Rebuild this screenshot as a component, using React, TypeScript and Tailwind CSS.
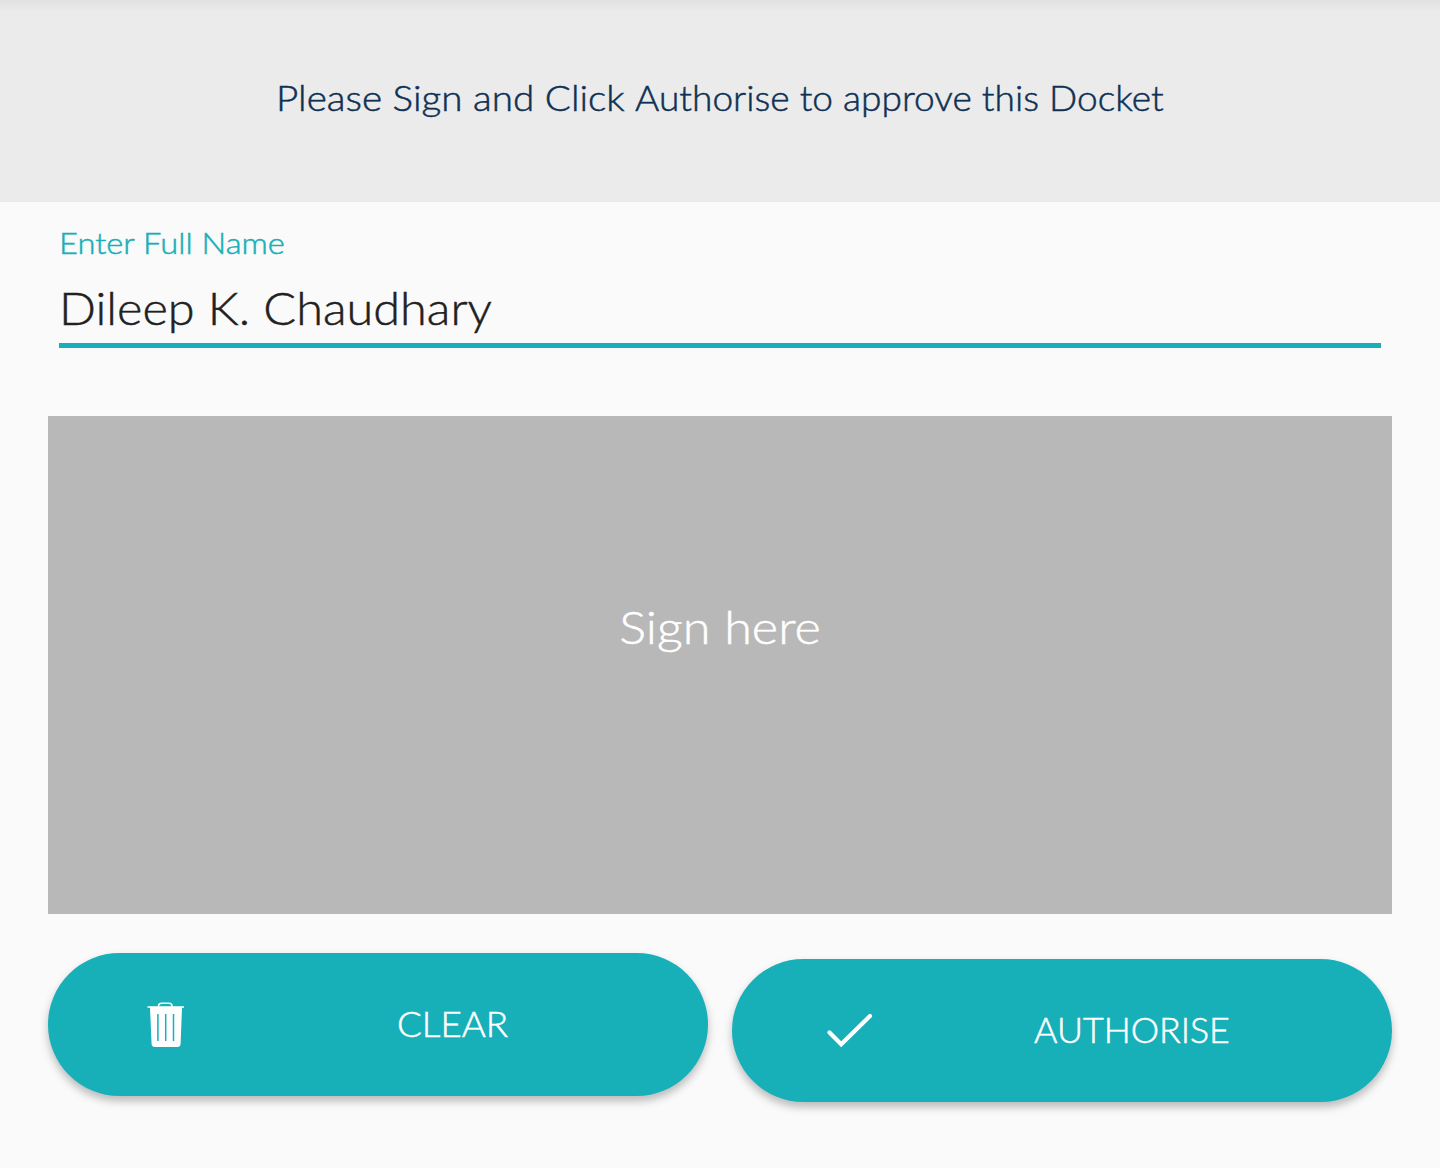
import type { ReactNode } from "react";

function TrashIcon() {
  return (
    <svg width="38" height="46" viewBox="0 0 38 46" fill="none" aria-hidden="true">
      <path d="M11.500 5V4Q11.500 1.200 14.500 1.200H22Q25 1.200 25 4V5" stroke="white" strokeWidth="1.500" />
      <path d="M0.500 4.200H37V5.800H35L33.600 42Q33.400 45 30.200 45H8Q4.800 45 4.600 42L3 5.800H0.500Z" fill="white" />
      <path d="M10.900 12V39M18.700 12V39M26.500 12V39" stroke="#17b0b9" strokeWidth="1.500" />
    </svg>
  );
}

function CheckIcon() {
  return (
    <svg width="48" height="36" viewBox="0 0 48 36" fill="none" aria-hidden="true">
      <path d="M3.500 19.500L15.200 31.200L44 3" stroke="white" strokeWidth="4.200" strokeLinecap="round" />
    </svg>
  );
}

function PillButton({ icon, children, className }: { icon: ReactNode; children: ReactNode; className: string }) {
  return (
    <button
      type="button"
      className={`flex h-[143px] w-[660px] items-center rounded-full bg-[#17b0b9] text-[35px] leading-[42px] font-light text-white shadow-[0_5px_8px_rgba(0,0,0,0.26)] ${className}`}
    >
      {icon}
      {children}
    </button>
  );
}

export default function App() {
  return (
    <main className="h-[1168px] w-[1440px] overflow-hidden bg-[#fafafa] font-['Lato',sans-serif] font-light [-webkit-text-stroke-width:0.5px]">
      <header className="flex h-[202px] justify-center bg-[#ebebeb] bg-[linear-gradient(to_bottom,#e2e2e2_0,#ebebeb_12px)] pt-[76px]">
        <h1 className="flex h-[42px] w-[888px] justify-between text-[35px] leading-[42px] font-light whitespace-nowrap text-[#0f3154]">
          <span className="origin-left scale-x-[1.104]">Please Sign and Click </span>
          <span className="origin-right scale-x-[1.06]">Authorise to approve this Docket</span>
        </h1>
      </header>
      <section className="mx-[59px] flex h-[146px] flex-col border-b-[5px] border-[#17b0b9] pt-5">
        <label htmlFor="full-name" className="h-10 text-[30px] leading-10 text-[#17b0b9]">
          <span className="inline-block origin-left scale-x-[1.09]">Enter Full Name</span>
        </label>
        <div id="full-name" className="mt-[18px] h-14 text-[46px] leading-[56px] whitespace-nowrap text-[#212121]">
          <span className="inline-block origin-left scale-x-[1.058]">Dileep K. Chaudhary</span>
        </div>
      </section>
      <section className="mx-12 mt-[68px] flex h-[498px] justify-center bg-[#b8b8b8] pt-[183px]">
        <span className="h-14 scale-x-[1.12] text-[45px] leading-[56px] text-white">Sign here</span>
      </section>
      <div className="mx-12 mt-[39px] flex gap-6">
        <PillButton icon={<TrashIcon />} className="pl-[99px]">
          <span className="mb-[3px] ml-[212px] inline-block origin-left scale-x-[1.05]">CLEAR</span>
        </PillButton>
        <PillButton icon={<CheckIcon />} className="mt-[6px] pl-[94px]">
          <span className="mb-[3px] ml-[160px] inline-block origin-left scale-x-[1.022]">AUTHORISE</span>
        </PillButton>
      </div>
    </main>
  );
}
